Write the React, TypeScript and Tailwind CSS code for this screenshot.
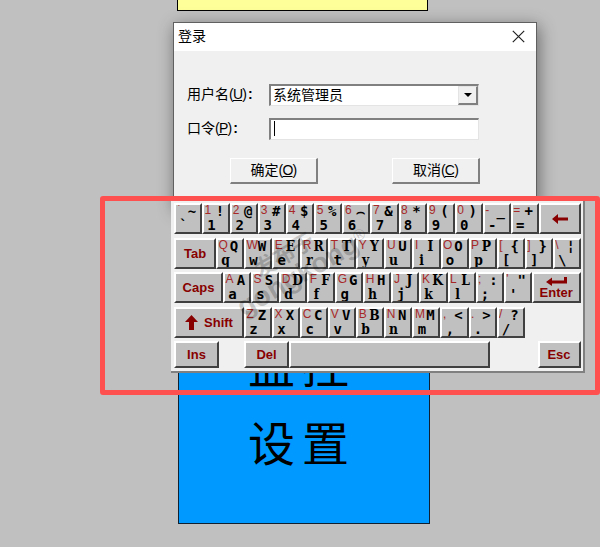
import React from 'react';

interface KeyData {
  red: string;
  upper: string;
  lower: string;
}

const toKeys = (list: string): KeyData[] =>
  list.split(' ').map(item => {
    const [red, upper, lower] = Array.from(item);
    return { red, upper, lower };
  });

const digitRow = toKeys("`~` 1!1 2@2 3#3 4$4 5%5 6⌢6 7&7 8*8 9(9 0)0 -_- =+=");
const topRow = toKeys("QQq WWw EEe RRr TTt YYy UUu IIi OOo PPp [{[ ]}] \\¦\\");
const homeRow = toKeys("AAa SSs DDd FFf GGg HHh JJj KKk LLl ;:; '\"'");
const bottomRow = toKeys("ZZz XXx CCc VVv BBb NNn MMm ,<, .>. /?/");

// letters that carry slab serifs on the key caps
const SLAB = 'ERTYPFKDLBIJrfhnpkdbiuyql';

const bevel = 'bg-[#c0c0c0] border-t-2 border-l-2 border-t-white border-l-white border-b-2 border-r-2 border-b-[#404040] border-r-[#404040] shrink-0 overflow-hidden';

const Glyph = ({ char }: { char: string }) => (
  <span
    className={`flex justify-center w-[9px] h-[13px] leading-[13px] whitespace-nowrap font-bold text-black ${
      SLAB.includes(char)
        ? "font-['DejaVu_Serif',serif] text-[14px] scale-x-[0.88]"
        : "font-['DejaVu_Sans_Mono',monospace] text-[14px]"
    }`}
  >
    {char}
  </span>
);

const CharKey: React.FC<{ data: KeyData }> = ({ data }) => (
  <div className={`${bevel} w-[28.07px] h-[31px]`}>
    <div className="flex h-[14px]">
      <span className="w-[11.5px] pl-[0.5px] leading-[11px] text-[12px] text-[#a82828]">{data.red}</span>
      <Glyph char={data.upper} />
    </div>
    <div className="pl-[3px]">
      <Glyph char={data.lower} />
    </div>
  </div>
);

const WideKey = ({ className, children }: { className: string, children?: React.ReactNode }) => (
  <div className={`${bevel} ${className} flex items-center justify-center font-bold text-[13px] leading-none text-[#880000]`}>
    {children}
  </div>
);

const Keyboard = () => (
  <div className="absolute left-[171px] top-[200px] w-[414px] h-[173px] pl-[3px] pt-[3px] flex flex-col gap-[3.5px] bg-[#f0f0f0] border-r-2 border-b-2 border-[#808080] font-['Liberation_Sans',sans-serif]">
    <div className="flex h-[31px]">
      {digitRow.map((key, i) => <CharKey key={i} data={key} />)}
      <WideKey className="w-[42px] h-[31px]">
        <svg className="w-4 h-2.5" viewBox="0 0 16 10" fill="currentColor"><path d="M0 5 6 0v3.5h10v3H6V10z" /></svg>
      </WideKey>
    </div>
    <div className="flex h-[31px]">
      <WideKey className="w-[42px] h-[31px]">Tab</WideKey>
      {topRow.map((key, i) => <CharKey key={i} data={key} />)}
    </div>
    <div className="flex h-[31px]">
      <WideKey className="w-[49px] h-[31px]">Caps</WideKey>
      {homeRow.map((key, i) => <CharKey key={i} data={key} />)}
      <WideKey className="w-[49px] h-[31px] flex-col">
        <svg className="w-[21px] h-[10px]" viewBox="0 0 21 10" fill="currentColor"><path d="M0 6 6 1.5v3h12V1h3v6.5H6V10z" /></svg>
        <span>Enter</span>
      </WideKey>
    </div>
    <div className="flex h-[31px]">
      <WideKey className="w-[70px] h-[31px] gap-1.5">
        <svg className="w-[13px] h-[15px]" viewBox="0 0 13 15" fill="currentColor"><path d="M6.5 0 13 7H9v8H4V7H0z" /></svg>
        <span>Shift</span>
      </WideKey>
      {bottomRow.map((key, i) => <CharKey key={i} data={key} />)}
    </div>
    <div className="flex h-[27px]">
      <WideKey className="w-[45px] h-[27px]">Ins</WideKey>
      <WideKey className="ml-[25px] w-[45px] h-[27px]">Del</WideKey>
      <WideKey className="w-[201px] h-[27px]" />
      <WideKey className="ml-[47.5px] w-[43px] h-[27px]">Esc</WideKey>
    </div>
  </div>
);

const DialogButton = ({ label, hotkey }: { label: string, hotkey: string }) => (
  <button className="w-[88px] h-[26px] flex items-center justify-center bg-[#f0f0f0] border-t border-l border-white border-b-2 border-r-2 border-b-[#808080] border-r-[#808080]">
    {label}<span className="tracking-[-0.8px]">(<u>{hotkey}</u>)</span>
  </button>
);

const LoginDialog = () => (
  <div className="absolute left-[173px] top-[22px] w-[364px] h-[186px] bg-[#f0f0f0] border border-[#606060] shadow-[2px_4px_16px_rgba(0,0,0,0.45)] text-[14px] text-black">
    <div className="flex items-center justify-between h-[28px] bg-white pl-1 pr-[11px]">
      <span className="-mt-0.5">登录</span>
      <svg className="w-[13px] h-[13px] -mt-0.5" viewBox="0 0 13 13" fill="none" stroke="#222" strokeWidth="1.2"><path d="M.8.8l11.4 11.4M12.2.8.8 12.2" /></svg>
    </div>
    <div className="pl-[13px] pt-[32px]">
      <div className="flex items-center h-[23px]">
        <span className="w-[82px] whitespace-nowrap">用户名<span className="tracking-[-0.8px]">(<u>U</u>)</span><b className="pl-0.5">:</b></span>
        <div className="flex w-[210px] h-[22px] bg-white border-t-2 border-l-2 border-[#808080] border-r border-b border-r-[#e4e4e4] border-b-[#e4e4e4]">
          <span className="grow pl-[2px] leading-[18px]">系统管理员</span>
          <div className="w-[20px] h-[19px] flex items-center justify-center bg-[#f0f0f0] border-r-2 border-b-2 border-[#808080] border-t border-l border-t-[#e4e4e4] border-l-[#e4e4e4]">
            <svg className="w-2 h-1" viewBox="0 0 8 4"><path d="M0 0h8L4 4z" /></svg>
          </div>
        </div>
      </div>
      <div className="flex items-center h-[23px] mt-[11px]">
        <span className="w-[82px] whitespace-nowrap">口令<span className="tracking-[-0.8px]">(<u>P</u>)</span><b className="pl-0.5">:</b></span>
        <div className="w-[210px] h-[22px] bg-white border-t-2 border-l-2 border-[#808080] border-r border-b border-r-[#e4e4e4] border-b-[#e4e4e4] pl-[3px] pt-px">
          <div className="w-px h-[15px] bg-black" />
        </div>
      </div>
      <div className="flex gap-[74px] pl-[43px] mt-[18px]">
        <DialogButton label="确定" hotkey="O" />
        <DialogButton label="取消" hotkey="C" />
      </div>
    </div>
  </div>
);

export default function App() {
  return (
    <div className="relative w-[600px] h-[547px] overflow-hidden bg-[#c0c0c0] font-['Liberation_Sans','Noto_Sans_CJK_SC',sans-serif]">
      <div className="absolute left-[177px] -top-2 w-[251px] h-[19px] bg-[#ffff99] border border-black" />
      <div className="absolute left-[178px] top-[300px] w-[252px] h-[224px] bg-[#0099ff] border border-[#102030] pt-[23px] text-center text-[47px] leading-[78px] tracking-[7px] text-black font-['Noto_Sans_CJK_SC',sans-serif]">
        <div className="pr-1">监控</div>
        <div className="pr-1">设置</div>
      </div>
      <LoginDialog />
      <Keyboard />
      <div className="absolute left-[100px] top-[196px] w-[500px] h-[199px] border-[5px] border-[#ff5050] rounded-[3px]" />
      <div className="absolute left-[223px] top-[237px] w-[152px] -rotate-[30deg] font-bold text-black/20 leading-[24px] whitespace-nowrap">
        <div className="pl-[33px] text-[22px]">发布于</div>
        <div className="text-[28px]">gongkong<sup className="text-[16px] font-normal">®</sup></div>
      </div>
    </div>
  );
}
